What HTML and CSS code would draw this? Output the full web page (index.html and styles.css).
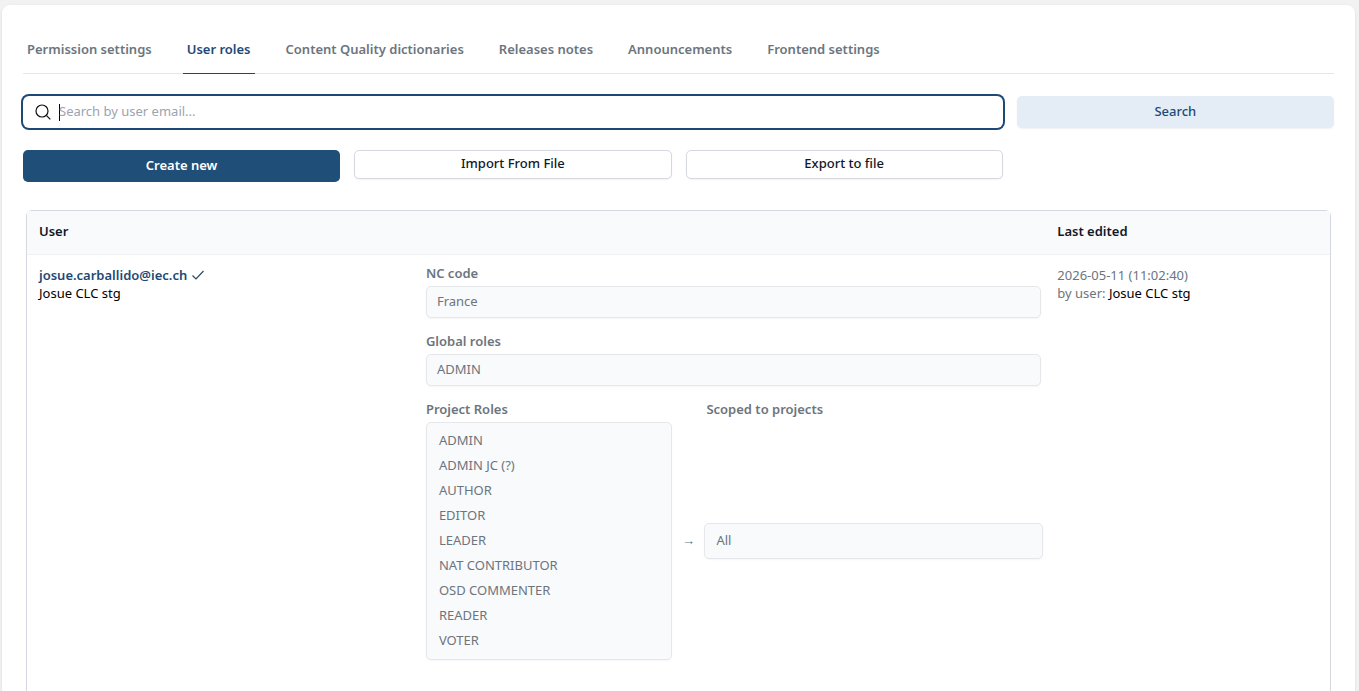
FILE: index.html
```html
<!DOCTYPE html>
<html lang="en">
<head>
    <meta charset="UTF-8">
    <meta name="viewport" content="width=device-width, initial-scale=1.0">
    <title>User roles</title>
    <link rel="stylesheet" href="styles.css">
</head>
<body>
    <main class="card">
        <nav class="tabs">
            <a class="tab" href="#permissions">Permission settings</a>
            <a class="tab active" href="#roles" aria-current="page">User roles</a>
            <a class="tab" href="#dictionaries">Content Quality dictionaries</a>
            <a class="tab" href="#releases">Releases notes</a>
            <a class="tab" href="#announcements">Announcements</a>
            <a class="tab" href="#frontend">Frontend settings</a>
        </nav>

        <form class="toolbar">
            <div class="search-box">
                <svg class="search-icon" viewBox="0 0 16 16" aria-hidden="true">
                    <circle cx="7" cy="7" r="6"/>
                    <path d="M11.3 11.3 15.3 15.3"/>
                </svg>
                <span class="caret"></span>
                <input class="search-input" type="text" placeholder="Search by user email..." aria-label="Search by user email">
            </div>
            <button class="btn btn-soft" type="submit">Search</button>
            <button class="btn btn-primary" type="button">Create new</button>
            <button class="btn btn-outline" type="button">Import From File</button>
            <button class="btn btn-outline" type="button">Export to file</button>
        </form>

        <div class="table-wrap">
            <table class="roles-table">
                <thead>
                    <tr>
                        <th class="col-user">User</th>
                        <th class="col-roles"></th>
                        <th class="col-edited">Last edited</th>
                    </tr>
                </thead>
                <tbody>
                    <tr>
                        <td>
                            <div class="user">
                                <a class="email" href="mailto:josue.carballido@iec.ch">josue.carballido@iec.ch</a>
                                <svg class="check" viewBox="0 0 12 10" aria-hidden="true">
                                    <path d="M.5 5.5 4 9 11.5 1"/>
                                </svg>
                            </div>
                            <div class="name">Josue CLC stg</div>
                        </td>
                        <td class="roles">
                            <div class="field">
                                <label class="label" for="ncCode">NC code</label>
                                <input class="box" id="ncCode" type="text" value="France" readonly>
                            </div>
                            <div class="field">
                                <label class="label" for="globalRoles">Global roles</label>
                                <input class="box" id="globalRoles" type="text" value="ADMIN" readonly>
                            </div>
                            <div class="scopes">
                                <span class="label" id="projectRoles">Project Roles</span>
                                <label class="label label-scope" for="scope">Scoped to projects</label>
                                <ul class="role-list" aria-labelledby="projectRoles">
                                    <li>ADMIN</li>
                                    <li>ADMIN JC (?)</li>
                                    <li>AUTHOR</li>
                                    <li>EDITOR</li>
                                    <li>LEADER</li>
                                    <li>NAT CONTRIBUTOR</li>
                                    <li>OSD COMMENTER</li>
                                    <li>READER</li>
                                    <li>VOTER</li>
                                </ul>
                                <span class="arrow">→</span>
                                <input class="box box-scope" id="scope" type="text" value="All" readonly>
                            </div>
                        </td>
                        <td class="edited">
                            <div>2026-05-11 (11:02:40)</div>
                            <div>by user: <span class="name">Josue CLC stg</span></div>
                        </td>
                    </tr>
                </tbody>
            </table>
        </div>
    </main>
</body>
</html>
```

FILE: styles.css
```css
* {
    box-sizing: border-box;
}
body {
    display: flex;
    flex-direction: column;
    min-height: 100vh;
    margin: 0;
    padding: 5px 4px 0 2px;
    background-color: #f2f2f2;
    font-family: "Noto Sans", sans-serif;
    font-size: 13px;
    line-height: 18px;
    color: #6c757d;
}
input, button {
    font: inherit;
}
.card {
    flex: 1;
    display: flex;
    flex-direction: column;
    padding: 19px 21px 0;
    background-color: #fff;
    border-radius: 8px 8px 0 0;
    box-shadow: 0 1px 3px rgba(0, 0, 0, 0.1);
}

/* Tabs */
.tabs {
    display: flex;
    gap: 27px;
    border-bottom: 1px solid #e5e7eb;
}
.tab {
    padding: 16px 4px 15px;
    margin-bottom: -1px;
    border-bottom: 1px solid transparent;
    color: #6c757d;
    font-weight: 600;
    text-decoration: none;
}
.tab.active {
    color: #1e4976;
    border-color: #1e4976;
}

/* Search and buttons */
.toolbar {
    display: grid;
    grid-template-columns: repeat(4, 1fr);
    align-items: start;
    gap: 22px 14px;
    margin: 22px 0 28px;
}
.search-box {
    grid-column: span 3;
    display: flex;
    align-items: center;
    height: 32px;
    padding: 0 12px;
    border-radius: 6px;
    box-shadow: 0 0 0 2px #1e4976;
}
.search-icon {
    width: 16px;
    height: 16px;
    margin-right: 8px;
    fill: none;
    stroke: #111;
    stroke-width: 1.2;
}
.caret {
    width: 1px;
    height: 17px;
    margin-right: -1px;
    background-color: #000;
}
.search-input {
    flex: 1;
    padding: 0 0 2px;
    border: 0;
    outline: 0;
    background: transparent;
}
.search-input::placeholder {
    color: #9ca3af;
}
.btn {
    height: 32px;
    padding: 0 12px 2px;
    border: 0;
    border-radius: 5px;
    font-weight: 500;
    cursor: pointer;
}
.btn-soft {
    background-color: #e4edf5;
    color: #1e4976;
    box-shadow: 0 1px 2px rgba(0, 0, 0, 0.06);
}
.btn-primary {
    background-color: #1f4e79;
    color: #fff;
    font-weight: 600;
}
.btn-outline {
    height: 29px;
    padding-bottom: 4px;
    border: 1px solid #d5d8e0;
    background-color: #fff;
    color: #111827;
    box-shadow: 0 1px 2px rgba(0, 0, 0, 0.05);
}

/* Roles table */
.table-wrap {
    flex: 1;
    margin: 0 3px;
    border: 1px solid #d5d8e0;
    border-bottom: 0;
    border-radius: 6px 6px 0 0;
}
.roles-table {
    width: 100%;
    table-layout: fixed;
    border-collapse: collapse;
}
.col-user {
    width: 30%;
}
.col-roles {
    width: 48%;
}
.col-edited {
    width: 22%;
}
th {
    height: 43px;
    padding: 0 12px 2px;
    background-color: #f9fafc;
    border-bottom: 1px solid #eff1f3;
    color: #111827;
    font-weight: 600;
    text-align: left;
}
td {
    padding: 11px 12px;
    vertical-align: top;
}
.col-edited, .edited {
    padding-left: 14px;
}
.roles {
    padding: 9px 2px 12px 8px;
}
.user {
    display: flex;
    align-items: center;
    gap: 5px;
}
.email {
    color: #1e4976;
    font-weight: 600;
    text-decoration: none;
}
.check {
    width: 12px;
    height: 10px;
    fill: none;
    stroke: #2c4a5e;
    stroke-width: 1.2;
}
.name {
    color: #000;
}
.field {
    margin-bottom: 14px;
}
.label {
    display: block;
    margin-bottom: 4px;
    font-weight: 600;
}
.box {
    display: block;
    width: 100%;
    height: 32px;
    padding: 0 10px 2px;
    border: 1px solid #e5e7eb;
    border-radius: 5px;
    outline: 0;
    background-color: #f9fafc;
    color: #6c757d;
    box-shadow: 0 1px 2px rgba(0, 0, 0, 0.04);
}
.scopes {
    display: grid;
    grid-template-columns: 8fr 32px 11fr;
    align-items: center;
    margin-right: -2px;
}
.label-scope {
    grid-column: 3;
    padding-left: 2px;
}
.role-list {
    margin: 0;
    padding: 5px 12px 6px;
    border: 1px solid #e5e7eb;
    border-radius: 5px;
    background-color: #f9fafc;
    box-shadow: 0 1px 2px rgba(0, 0, 0, 0.04);
    line-height: 25px;
    list-style: none;
}
.arrow {
    font-family: "Liberation Sans", sans-serif;
    text-align: center;
}
.box-scope {
    height: 36px;
    padding: 0 11px 2px;
}
```
